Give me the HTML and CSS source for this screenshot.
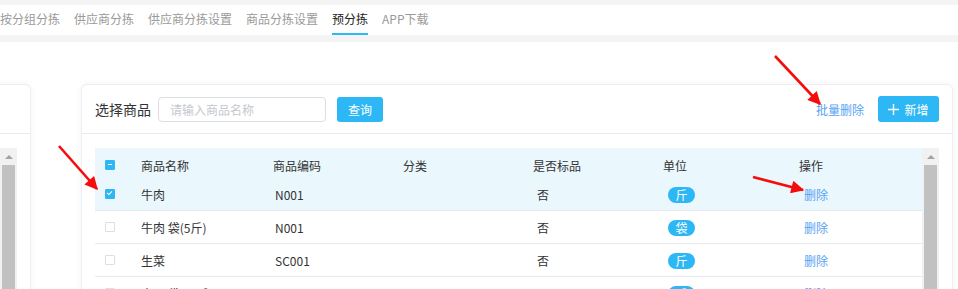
FILE: index.html
```html
<!DOCTYPE html>
<html lang="zh-CN">
<head>
    <meta charset="UTF-8">
    <meta name="viewport" content="width=device-width, initial-scale=1.0">
    <title>预分拣</title>
    <link rel="stylesheet" href="styles.css">
</head>
<body>

    <div class="tabs">
        <span class="tab">按分组分拣</span>
        <span class="tab">供应商分拣</span>
        <span class="tab">供应商分拣设置</span>
        <span class="tab">商品分拣设置</span>
        <span class="tab active">预分拣</span>
        <span class="tab">APP下载</span>
    </div>

    <div class="main">
        <div class="card side-card">
            <div class="card-head"></div>
            <div class="card-body side-body">
                <div class="scrollbar">
                    <div class="scroll-up"></div>
                    <div class="scroll-thumb"></div>
                </div>
            </div>
        </div>

        <div class="card goods-card">
            <div class="card-head">
                <div class="search">
                    <span class="search-label">选择商品</span>
                    <input class="search-input" type="text" placeholder="请输入商品名称">
                    <button class="btn">查询</button>
                </div>
                <div class="actions">
                    <a class="link">批量删除</a>
                    <button class="btn btn-add">
                        <svg width="11" height="11" viewBox="0 0 11 11"><path d="M5.5 0V11M0 5.5H11" stroke="#fff" stroke-width="1.4"/></svg>
                        新增
                    </button>
                </div>
            </div>

            <div class="card-body">
                <div class="table-wrap">
                    <div class="grid">
                        <div class="row head">
                            <div class="cell check"><span class="checkbox half"></span></div>
                            <div class="cell">商品名称</div>
                            <div class="cell">商品编码</div>
                            <div class="cell">分类</div>
                            <div class="cell">是否标品</div>
                            <div class="cell">单位</div>
                            <div class="cell">操作</div>
                        </div>
                        <div class="row picked">
                            <div class="cell check"><span class="checkbox on"></span></div>
                            <div class="cell">牛肉</div>
                            <div class="cell code">N001</div>
                            <div class="cell"></div>
                            <div class="cell std">否</div>
                            <div class="cell unit"><span class="badge">斤</span></div>
                            <div class="cell op"><a class="link">删除</a></div>
                        </div>
                        <div class="row">
                            <div class="cell check"><span class="checkbox"></span></div>
                            <div class="cell">牛肉 袋(5斤)</div>
                            <div class="cell code">N001</div>
                            <div class="cell"></div>
                            <div class="cell std">否</div>
                            <div class="cell unit"><span class="badge">袋</span></div>
                            <div class="cell op"><a class="link">删除</a></div>
                        </div>
                        <div class="row">
                            <div class="cell check"><span class="checkbox"></span></div>
                            <div class="cell">生菜</div>
                            <div class="cell code">SC001</div>
                            <div class="cell"></div>
                            <div class="cell std">否</div>
                            <div class="cell unit"><span class="badge">斤</span></div>
                            <div class="cell op"><a class="link">删除</a></div>
                        </div>
                        <div class="row">
                            <div class="cell check"><span class="checkbox"></span></div>
                            <div class="cell">土豆 袋(10斤)</div>
                            <div class="cell code">TD001</div>
                            <div class="cell"></div>
                            <div class="cell std">否</div>
                            <div class="cell unit"><span class="badge">斤</span></div>
                            <div class="cell op"><a class="link">删除</a></div>
                        </div>
                    </div>
                    <div class="scrollbar">
                        <div class="scroll-up"></div>
                        <div class="scroll-thumb"></div>
                    </div>
                </div>
            </div>
        </div>
    </div>

    <svg class="marks" width="958" height="289" viewBox="0 0 958 289">
        <defs>
            <marker id="head" viewBox="0 0 10 10" refX="9" refY="5" markerWidth="5.5" markerHeight="5" orient="auto">
                <path d="M0 0L10 5L0 10z" fill="#f50d0d"/>
            </marker>
        </defs>
        <line x1="59" y1="146" x2="97" y2="189" stroke="#f50d0d" stroke-width="2.6" marker-end="url(#head)"/>
        <line x1="775" y1="56" x2="820" y2="104" stroke="#f50d0d" stroke-width="2.6" marker-end="url(#head)"/>
        <line x1="753" y1="177" x2="803" y2="190" stroke="#f50d0d" stroke-width="2.6" marker-end="url(#head)"/>
    </svg>

</body>
</html>
```

FILE: styles.css
```css
html, body {
    margin: 0;
    height: 100%;
    overflow: hidden;
}
body {
    font-family: "Noto Sans CJK SC", "Liberation Sans", sans-serif;
    font-size: 12px;
    color: #333;
    background: #f4f4f5;
    padding-top: 5px;
    box-sizing: border-box;
    position: relative;
}

/* tabs */
.tabs {
    display: flex;
    gap: 14px;
    height: 30px;
    background: #fff;
    margin-bottom: 7px;
}
.tab {
    line-height: 28px;
    height: 30px;
    box-sizing: border-box;
    color: #9a9a9a;
    white-space: nowrap;
}
.tab.active {
    color: #222;
    border-bottom: 2px solid #2db7f5;
}

/* cards */
.main {
    display: flex;
    gap: 50px;
    background: #fff;
    padding-top: 42px;
    height: 100%;
}
.card {
    background: #fff;
    border: 1px solid #eceef3;
    border-radius: 6px;
    box-shadow: 0 0 6px rgba(0,0,0,0.05);
    box-sizing: border-box;
    flex-shrink: 0;
}
.side-card {
    width: 60px;
    margin-left: -29px;
}
.goods-card { width: 872px; }
.card-head {
    height: 48px;
    padding: 0 13px;
    border-bottom: 1px solid #e8eaef;
    display: flex;
    align-items: center;
    justify-content: space-between;
}
.card-body { padding: 14px 13px 0; }
.side-body {
    display: flex;
    justify-content: flex-end;
}

/* search bar */
.search, .actions {
    display: flex;
    align-items: center;
}
.search-label {
    font-size: 14px;
    margin-right: 7px;
}
.search-input {
    width: 168px;
    height: 25px;
    box-sizing: border-box;
    border: 1px solid #dcdee2;
    border-radius: 4px;
    padding: 0 11px;
    font-family: inherit;
    font-size: 12px;
    outline: none;
}
.search-input::placeholder { color: #c5c8ce; }
.btn {
    height: 25px;
    width: 46px;
    margin-left: 11px;
    border: none;
    border-radius: 3px;
    background: #2db7f5;
    color: #fff;
    font-family: inherit;
    font-size: 12px;
    padding: 0;
}
.btn-add {
    width: 61px;
    height: 26px;
    margin-left: 14px;
    display: flex;
    align-items: center;
    justify-content: center;
    gap: 5px;
}
.link {
    color: #57a3f3;
    cursor: pointer;
}

/* table */
.table-wrap {
    display: flex;
    height: 200px;
}
.grid { width: 827px; }
.row {
    display: grid;
    grid-template-columns: 46px 132px 130px 130px 130px 136px 1fr;
    align-items: center;
    height: 33px;
    box-sizing: border-box;
    border-bottom: 1px solid #e8eaef;
}
.row.head {
    height: 30px;
    padding-top: 4px;
    border-bottom: none;
    background: #eaf7fd;
}
.row.picked { background: #eaf7fd; }
.cell { white-space: nowrap; }
.check {
    padding-left: 10px;
    display: flex;
}
.code { padding-left: 2px; }
.std { padding-left: 4px; }
.unit { padding-left: 5px; }
.op { padding-left: 5px; }

.checkbox {
    width: 10px;
    height: 10px;
    box-sizing: border-box;
    border: 1px solid #dcdee2;
    border-radius: 1px;
    background: #fff;
    position: relative;
}
.checkbox.on, .checkbox.half {
    background: #2db7f5;
    border-color: #2db7f5;
}
.checkbox.half::after {
    content: "";
    position: absolute;
    left: 2px;
    top: 3px;
    width: 4px;
    height: 1px;
    background: #fff;
}
.checkbox.on::after {
    content: "";
    position: absolute;
    left: 2px;
    top: 0;
    width: 2px;
    height: 4px;
    border: solid #fff;
    border-width: 0 1px 1px 0;
    transform: rotate(45deg);
}
.badge {
    display: inline-block;
    width: 27px;
    height: 16px;
    line-height: 16px;
    border-radius: 8px;
    background: #2db7f5;
    color: #fff;
    text-align: center;
}

/* fake scrollbar */
.scrollbar {
    width: 17px;
    height: 200px;
    background: #f1f1f1;
    display: flex;
    flex-direction: column;
    align-items: center;
}
.scroll-up {
    margin-top: 7px;
    width: 0;
    height: 0;
    border-left: 4px solid transparent;
    border-right: 4px solid transparent;
    border-bottom: 4px solid #a3a3a3;
}
.scroll-thumb {
    margin-top: 6px;
    width: 13px;
    flex: 1;
    background: #c1c1c1;
}

.marks {
    position: absolute;
    top: 0;
    left: 0;
    pointer-events: none;
}
```
